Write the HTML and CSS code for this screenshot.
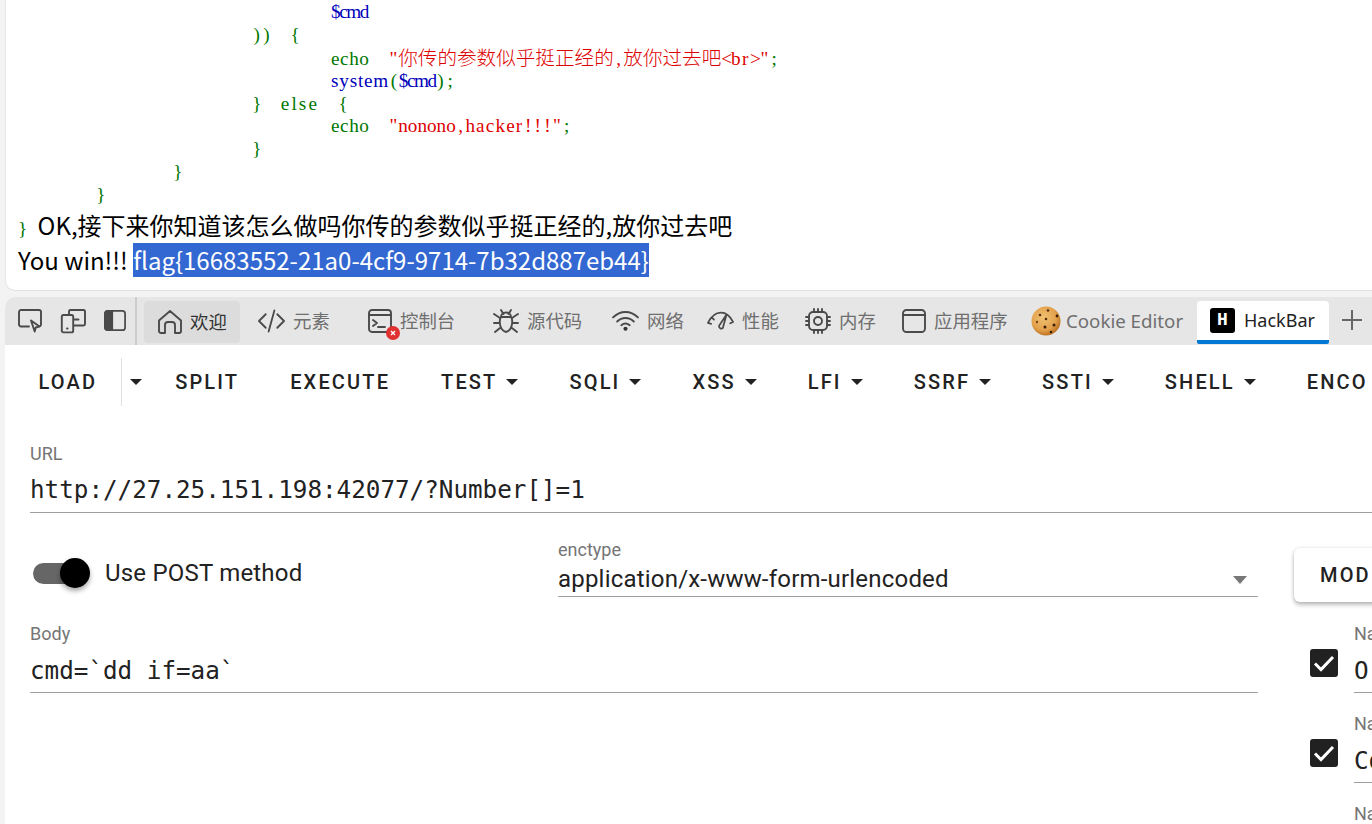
FILE: index.html
```html
<!DOCTYPE html>
<html lang="zh">
<head>
<meta charset="utf-8">
<title>HackBar</title>
<link rel="stylesheet" href="styles.css">
</head>
<body>
<section class="page">
  <div class="code">
    <div class="ln ind4 blue"><span class="w-cmd">$cmd</span></div>
    <div class="ln ind3 green"><span class="p">)</span><span class="p">)</span>  <span class="p">{</span></div>
    <div class="ln ind4 green"><span class="w-echo">echo</span>  <span class="red"><span class="p">"</span><span class="cjk">你传的参数似乎挺正经的</span><span class="p">,</span><span class="cjk">放你过去吧</span><span class="p">&lt;</span><span class="w-br">br</span><span class="p">&gt;</span><span class="p">"</span></span><span class="p">;</span></div>
    <div class="ln ind4 blue"><span class="w-sys">system</span><span class="green p">(</span><span class="w-cmd">$cmd</span><span class="green p">)</span><span class="green p">;</span></div>
    <div class="ln ind3 green"><span class="p">}</span>  <span class="w-else">else</span>  <span class="p">{</span></div>
    <div class="ln ind4 green"><span class="w-echo">echo</span>  <span class="red"><span class="p">"</span><span class="w-no">nonono</span><span class="p">,</span><span class="w-hack">hacker</span><span class="p">!</span><span class="p">!</span><span class="p">!</span><span class="p">"</span></span><span class="p">;</span></div>
    <div class="ln ind3 green"><span class="p">}</span></div>
    <div class="ln ind2 green"><span class="p">}</span></div>
    <div class="ln ind1 green"><span class="p">}</span></div>
  </div>
  <p class="out"><span class="code-inline">}</span> OK,接下来你知道该怎么做吗你传的参数似乎挺正经的,放你过去吧</p>
  <p class="out">You win!!! <span class="sel">flag{16683552-21a0-4cf9-9714-7b32d887eb44}</span></p>
</section>

<section class="devtools">
  <nav class="tabbar">
    <div class="tools">
      <svg class="ico" viewBox="0 0 24 24"><path d="M11 17.500H3a2 2 0 0 1-2-2V3a2 2 0 0 1 2-2h18a2 2 0 0 1 2 2v12.500a2 2 0 0 1-1 1.600"/><path d="M13 11.500l8.500 6-3.800 1-1 4z"/></svg>
      <svg class="ico" viewBox="0 0 24 24"><path d="M8 5V2.500A1.500 1.500 0 0 1 9.500 1h13A1.500 1.500 0 0 1 24 2.500V15a1.500 1.500 0 0 1-1.500 1.500H13"/><rect x="0.800" y="6" width="11.400" height="17.400" rx="1.600"/><path d="M13 10.500h4.500M6 19.500h.6"/></svg>
      <svg class="ico" viewBox="0 0 24 24"><rect x="1" y="1" width="22" height="21" rx="3"/><path class="solid" d="M4 1h5v21H4a3 3 0 0 1-3-3V4a3 3 0 0 1 3-3z"/></svg>
    </div>
    <div class="tab t-welcome active">
      <svg class="ico" viewBox="0 0 24 24"><path d="M1 10.500 12 1l11 9.500V21a2 2 0 0 1-2 2h-4V15a3 3 0 0 0-3-3h-4a3 3 0 0 0-3 3v8H3a2 2 0 0 1-2-2z"/></svg>
      <span class="tab-label">欢迎</span>
    </div>
    <div class="tab t-elements">
      <svg class="ico wide" viewBox="0 0 28 24"><path d="M8 5 1 12l7 7M20 5l7 7-7 7M17 1l-6 22"/></svg>
      <span class="tab-label">元素</span>
    </div>
    <div class="tab t-console">
      <span class="icon-wrap">
        <svg class="ico" viewBox="0 0 24 24"><rect x="1" y="1" width="22" height="22" rx="3"/><path d="M1 6h22M5 11l4 3-4 3M10 18h7"/></svg>
        <svg class="badge" viewBox="0 0 14 14"><circle cx="7" cy="7" r="7"/><path d="M5 5l4 4M9 5l-4 4"/></svg>
      </span>
      <span class="tab-label">控制台</span>
    </div>
    <div class="tab t-sources">
      <svg class="ico big" viewBox="0 0 26 26"><path d="M8 2l2.500 4M18 2l-2.500 4M8 9a5 4.500 0 0 1 10 0zM8 9c-2 3-2 13 5 15 7-2 7-12 5-15M1 6l6 4M25 6l-6 4M1 15h5M25 15h-5M2 24l5-4M24 24l-5-4"/></svg>
      <span class="tab-label">源代码</span>
    </div>
    <div class="tab t-network">
      <svg class="ico wide" viewBox="0 0 26 20"><path d="M1 6.500C8-.5 18-.5 25 6.500M5 10.500c4.500-4.500 11.500-4.500 16 0M9 14c2.500-2 5.500-2 8 0"/><circle class="dot" cx="13" cy="17.500" r="2"/></svg>
      <span class="tab-label">网络</span>
    </div>
    <div class="tab t-perf">
      <svg class="ico wide" viewBox="0 0 29 22"><path d="M1 13 C5 5 9 2 15 2c5 0 10 4 13 10M1 13l3.500 1M5 7l2.500 2.500M28 12l-3 1.500M21 4l-8 12a2.500 2.500 0 0 0 4 2.500z"/></svg>
      <span class="tab-label">性能</span>
    </div>
    <div class="tab t-memory">
      <svg class="ico big" viewBox="0 0 26 26"><rect x="4" y="4" width="18" height="18" rx="4"/><circle cx="13" cy="13" r="4"/><path d="M9 1v3M13 1v3M17 1v3M9 22v3M13 22v3M17 22v3M1 9h3M1 13h3M1 17h3M22 9h3M22 13h3M22 17h3"/></svg>
      <span class="tab-label">内存</span>
    </div>
    <div class="tab t-app">
      <svg class="ico" viewBox="0 0 24 24"><rect x="1" y="1" width="22" height="22" rx="3.500"/><path d="M1 6h22"/></svg>
      <span class="tab-label">应用程序</span>
    </div>
    <div class="tab t-cookie">
      <svg class="cookie" viewBox="0 0 30 30"><defs><radialGradient id="ck" cx="42%" cy="38%" r="62%"><stop offset="0" stop-color="#f0c272"/><stop offset=".7" stop-color="#e3a04a"/><stop offset="1" stop-color="#bd7424"/></radialGradient></defs><circle cx="15" cy="15" r="14.500" fill="url(#ck)"/><circle cx="9" cy="9" r="1.300" fill="#5a2c10"/><circle cx="17" cy="4.500" r="1.300" fill="#5a2c10"/><circle cx="26" cy="10" r="1.400" fill="#3b1c0a"/><circle cx="15" cy="13" r="1.300" fill="#5a2c10"/><circle cx="6" cy="16" r="1.200" fill="#7a4318"/><circle cx="14" cy="21" r="1.500" fill="#3b1c0a"/><circle cx="23" cy="19" r="1.500" fill="#3b1c0a"/><circle cx="20" cy="26" r="1.300" fill="#3b1c0a"/></svg>
      <span class="tab-label">Cookie Editor</span>
    </div>
    <div class="tab t-hackbar">
      <span class="hb-logo">H</span>
      <span class="tab-label">HackBar</span>
    </div>
    <svg class="plus" viewBox="0 0 20 20"><path d="M10 0v20M0 10h20"/></svg>
  </nav>

  <div class="panel">
    <div class="toolbar">
      <button class="btn split-main">LOAD</button>
      <button class="btn caret-only"><span class="caret"></span></button>
      <button class="btn">SPLIT</button>
      <button class="btn">EXECUTE</button>
      <button class="btn">TEST<span class="caret"></span></button>
      <button class="btn">SQLI<span class="caret"></span></button>
      <button class="btn">XSS<span class="caret"></span></button>
      <button class="btn">LFI<span class="caret"></span></button>
      <button class="btn">SSRF<span class="caret"></span></button>
      <button class="btn">SSTI<span class="caret"></span></button>
      <button class="btn">SHELL<span class="caret"></span></button>
      <button class="btn">ENCO</button>
    </div>

    <div class="form">
      <div class="field">
        <div class="label">URL</div>
        <div class="value mono">http://27.25.151.198:42077/?Number[]=1</div>
      </div>

      <div class="columns">
        <div class="left">
          <div class="post-row">
            <div class="switch-col">
              <span class="switch"><span class="knob"></span></span>
              <span class="switch-label">Use POST method</span>
            </div>
            <div class="select">
              <div class="label">enctype</div>
              <div class="select-value">application/x-www-form-urlencoded<span class="select-caret"></span></div>
            </div>
          </div>
          <div class="field">
            <div class="label">Body</div>
            <div class="value short mono">cmd=`dd if=aa`</div>
          </div>
        </div>
        <div class="right">
          <button class="mod">MOD</button>
          <div class="hdr">
            <span class="check"><svg viewBox="0 0 28 28"><path d="M5 14.500l6 6L23 8"/></svg></span>
            <div class="field grow"><div class="label">Na</div><div class="value short mono">O</div></div>
          </div>
          <div class="hdr">
            <span class="check"><svg viewBox="0 0 28 28"><path d="M5 14.500l6 6L23 8"/></svg></span>
            <div class="field grow"><div class="label">Na</div><div class="value short mono">Co</div></div>
          </div>
          <div class="hdr">
            <div class="check-space"></div>
            <div class="field grow"><div class="label">Na</div></div>
          </div>
        </div>
      </div>
    </div>
  </div>
</section>
</body>
</html>
```
FILE: styles.css
```css
* { box-sizing: border-box; }
html, body { margin: 0; height: 824px; overflow: hidden; }
body { background: #f3f3f3; padding-left: 5px; width: 1372px; }

.page {
  height: 291px;
  background: #fff;
  border-bottom: 1px solid #e0e0e0;
  border-left: 1px solid #e6e6e6;
  border-bottom-left-radius: 10px;
  padding: 1px 0 0 12px;
  font-family: "Noto Sans CJK SC", "Noto Sans", sans-serif;
  color: #000;
}
.code { height: 206px; }
.ln {
  height: 22.9px;
  line-height: 22.9px;
  font-family: "Liberation Serif", serif;
  font-size: 19.2px;
  letter-spacing: 0;
  word-spacing: 4.800px;
  white-space: pre;
}
.p { display: inline-block; width: 9.600px; text-align: center; }
.w-cmd { letter-spacing: -1.400px; }
.w-echo { letter-spacing: .55px; }
.w-else { letter-spacing: 2.100px; }
.w-sys { letter-spacing: .8px; }
.w-br { letter-spacing: 1.600px; }
.w-no { letter-spacing: 0; }
.w-hack { letter-spacing: 1.150px; }
.cjk { font-family: "Noto Sans CJK SC", sans-serif; font-size: 19.6px; font-weight: 300; line-height: 1; }
.ind1 { padding-left: 78px; }
.ind2 { padding-left: 155px; }
.ind3 { padding-left: 234px; }
.ind4 { padding-left: 313px; }
.blue { color: #0000bb; }
.green { color: #007700; }
.red { color: #dd0000; }
.out { margin: 0; height: 35px; line-height: 35px; font-size: 24px; white-space: nowrap; }
.code-inline { color: #007700; font-family: "Liberation Serif", serif; font-size: 19.2px; margin-right: 5px; }
.sel { background: #3367d1; color: #fff; display: inline-block; height: 34px; line-height: 34px; }

.devtools {
  margin-top: 6px;
  height: 527px;
  background: #fff;
  border-top-left-radius: 10px;
  overflow: hidden;
}
.tabbar {
  height: 48px;
  background: #e6e6e6;
  display: flex;
  align-items: flex-end;
  position: relative;
  padding-left: 13px;
}
.ico { fill: none; stroke: #4a4a4a; stroke-width: 1.9; stroke-linejoin: round; stroke-linecap: round; width: 24px; height: 24px; flex: none; overflow: visible; }
.ico .solid { fill: #4a4a4a; }
.ico .dot { fill: #333; stroke: none; }
.tools {
  width: 119px;
  height: 48px;
  display: flex;
  align-items: center;
  gap: 19px;
  border-right: 2px solid #ccc;
  margin-right: 7px;
  flex: none;
}
.tools .ico:last-child { width: 22px; height: 22px; }
.tab {
  height: 44px;
  display: flex;
  align-items: center;
  padding: 0 0 4px 14px;
  gap: 8px;
  flex: none;
  font-family: "Noto Sans CJK SC", sans-serif;
  font-size: 18.400px;
  color: #6f6f6f;
}
.tab-label { margin-top: -2px; }
.tab.active { background: #dcdcdc; color: #333; height: 42px; margin-bottom: 2px; padding-bottom: 0; border-radius: 4px; }
.wide { width: 27px; }
.big { width: 26px; height: 26px; }
.t-welcome { width: 96px; margin-right: 4px; }
.t-elements { width: 110px; }
.t-console { width: 125px; }
.t-sources { width: 119px; }
.t-network { width: 95px; }
.t-perf { width: 98px; }
.t-memory { width: 97px; }
.t-app { width: 129px; }
.t-cookie { width: 180px; gap: 5px; }
.t-cookie .tab-label { font-family: "Noto Sans", sans-serif; font-size: 18.700px; }
.icon-wrap { position: relative; display: flex; }
.badge { position: absolute; right: -8px; bottom: -7px; width: 14px; height: 14px; fill: #e03131; stroke: none; }
.badge path { stroke: #fff; stroke-width: 1.400; fill: none; }
.cookie { width: 30px; height: 30px; }
.t-hackbar {
  width: 132px;
  height: 43px;
  margin-bottom: 1px;
  background: #fff;
  color: #222;
  padding: 0 0 0 13px;
  gap: 9px;
  border-bottom: 4px solid #0078d4;
  border-radius: 4px 4px 2px 2px;
}
.t-hackbar .tab-label { font-family: "Noto Sans", sans-serif; font-size: 18px; }
.hb-logo {
  width: 25px; height: 25px;
  background: #000; color: #fff;
  border-radius: 3px;
  font: 700 18px/25px "Liberation Mono", monospace;
  text-align: center;
}
.plus { width: 20px; height: 20px; stroke: #666; stroke-width: 2; fill: none; margin: 0 0 15px 13px; flex: none; }

.panel { overflow: hidden; height: 479px; }
.toolbar { height: 74px; display: flex; align-items: center; padding-left: 8px; white-space: nowrap; }
.btn {
  border: 0; background: none; padding: 0 25.500px;
  font: 500 20px/48px Roboto, sans-serif;
  letter-spacing: 2.150px;
  color: #222;
  display: flex; align-items: center; gap: 9px; flex: none;
  height: 48px;
}
.split-main { border-right: 1px solid #e0e0e0; padding-right: 23.500px; }
.caret-only { padding: 0 8px 0 8px; }
.caret { width: 0; height: 0; border: 6px solid transparent; border-top-color: #222; border-bottom: 0; }

.form { padding: 23px 0 0 25px; width: 1400px; }
.label { height: 22px; font: 400 18px/24px Roboto, sans-serif; color: #757575; }
.columns .label { line-height: 22px; }
.field { border-bottom: 1px solid #9e9e9e; }
.value { height: 46px; line-height: 48px; margin-top: 2px; color: #222; }
.value.short { height: 45px; }
.mono { font-family: "DejaVu Sans Mono", monospace; font-size: 24.250px; white-space: nowrap; }
.columns { display: flex; margin-top: 26px; }
.left { width: 1228px; flex: none; }
.right { margin-left: 36px; width: 130px; flex: none; }
.post-row { display: flex; height: 58px; margin-bottom: 26px; }
.switch-col { width: 528px; display: flex; align-items: center; padding: 10px 0 0 3px; flex: none; }
.switch { position: relative; width: 52px; height: 21px; background: #666; border-radius: 11px; flex: none; margin-right: 20px; }
.knob { position: absolute; right: -5px; top: -5px; width: 30px; height: 30px; border-radius: 50%; background: #000; box-shadow: 0 3px 5px rgba(0,0,0,.35); }
.switch-label { font: 400 24px/30px Roboto, sans-serif; letter-spacing: .2px; color: #222; }
.select { flex: 1; }
.select-value {
  height: 36px; margin-top: 0;
  font: 400 24px/36px Roboto, sans-serif; letter-spacing: .2px; color: #222;
  border-bottom: 1px solid #9e9e9e;
  position: relative;
}
.select-caret { position: absolute; right: 11px; top: 15px; width: 0; height: 0; border: 7px solid transparent; border-top: 8px solid #777; border-bottom: 0; }
.mod {
  height: 54px; width: 130px; margin-top: 9px; border: 0; background: #fff;
  border-radius: 6px 0 0 6px; box-shadow: 0 3px 4px rgba(0,0,0,.25), 0 0 3px rgba(0,0,0,.12);
  font: 500 20px Roboto, sans-serif; letter-spacing: 2.150px; color: #222;
  text-align: left; padding-left: 26px;
}
.hdr { display: flex; margin-top: 20px; height: 70px; }
.mod + .hdr { margin-top: 21px; }
.check, .check-space { width: 28px; height: 28px; margin: 26px 16px 0 16px; flex: none; }
.check { background: #212121; border-radius: 3px; }
.check svg { display: block; fill: none; stroke: #fff; stroke-width: 3; }
.grow { width: 100px; }
```
